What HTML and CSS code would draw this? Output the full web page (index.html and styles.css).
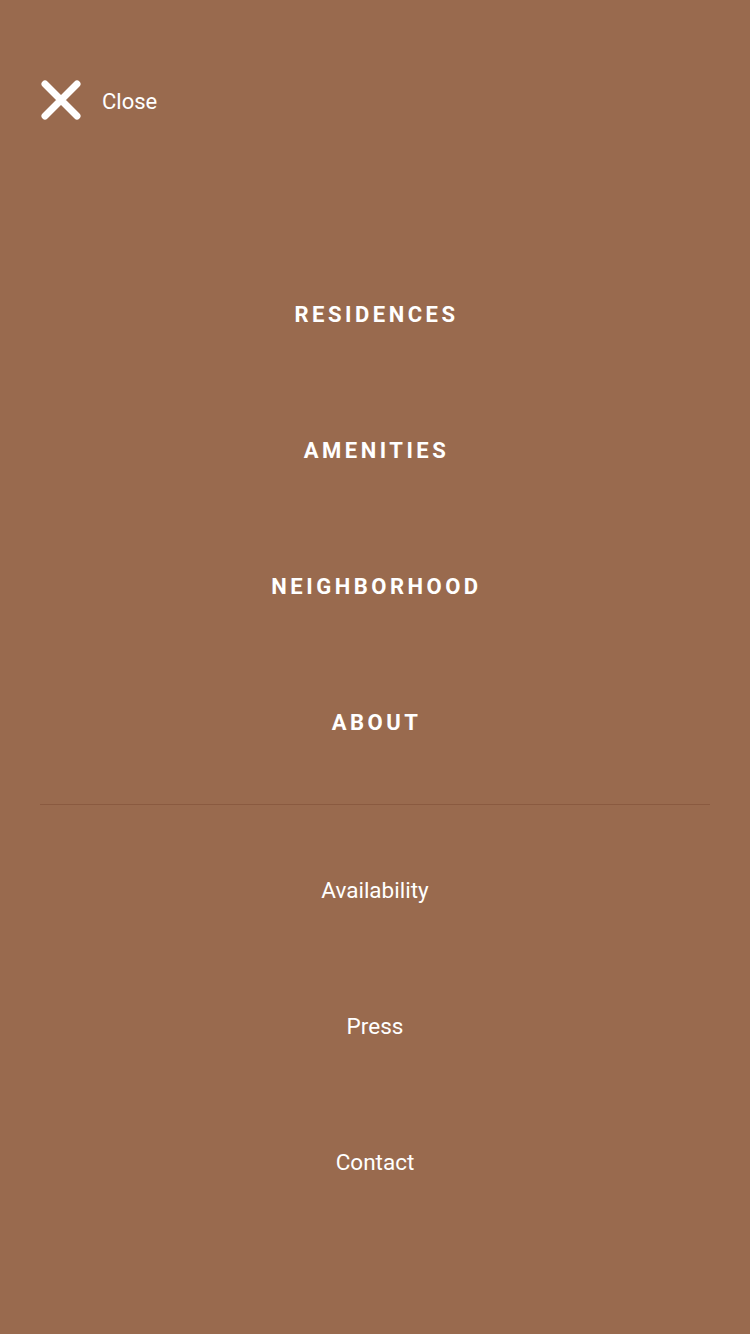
FILE: index.html
```html
<!DOCTYPE html>
<html>
<head>
<meta charset="utf-8">
<link rel="stylesheet" href="styles.css">
</head>
<body>
<div class="menu">
  <header class="top">
    <a class="close" href="#">
      <svg class="close-icon" viewBox="0 0 40 40" width="40" height="40">
        <path d="M4 4 L36 36 M36 4 L4 36" stroke="#fff" stroke-width="7" stroke-linecap="round" fill="none"/>
      </svg>
      <span class="close-label">Close</span>
    </a>
  </header>
  <nav class="primary">
    <a class="item main" href="#">RESIDENCES</a>
    <a class="item main" href="#">AMENITIES</a>
    <a class="item main" href="#">NEIGHBORHOOD</a>
    <a class="item main" href="#">ABOUT</a>
  </nav>
  <div class="divider"></div>
  <nav class="secondary">
    <a class="item sub" href="#">Availability</a>
    <a class="item sub" href="#">Press</a>
    <a class="item sub" href="#">Contact</a>
  </nav>
</div>
</body>
</html>
```
FILE: styles.css
```css
html, body {
  margin: 0;
  padding: 0;
}
body {
  background: #996a4e;
  width: 750px;
  height: 1334px;
  font-family: "Roboto", "Liberation Sans", sans-serif;
  color: #fff;
}
.menu {
  display: flex;
  flex-direction: column;
}
.top {
  padding: 80px 0 0 41px;
  height: 40px;
}
.close {
  display: flex;
  align-items: center;
  gap: 21px;
  color: #fff;
  text-decoration: none;
  height: 40px;
}
.close-icon {
  display: block;
}
.close-label {
  font-size: 22px;
  font-weight: 400;
  line-height: 1;
  padding-top: 4px;
}
.primary {
  margin-top: 126px;
  display: flex;
  flex-direction: column;
}
.item {
  height: 136px;
  display: flex;
  align-items: center;
  justify-content: center;
  color: #fff;
  text-decoration: none;
}
.main {
  font-size: 22px;
  font-weight: 700;
  letter-spacing: 3.5px;
  padding-left: 3px;
}
.divider {
  margin: 14px 40px 0;
  height: 1px;
  background: #8a5a40;
}
.secondary {
  margin-top: 17px;
  display: flex;
  flex-direction: column;
}
.sub {
  font-size: 22.5px;
  font-weight: 400;
}
```
